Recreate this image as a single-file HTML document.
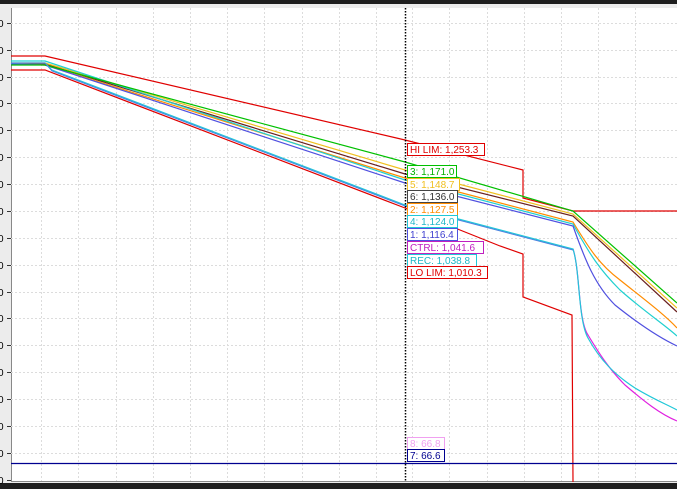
<!DOCTYPE html>
<html><head><style>
html,body{margin:0;padding:0;background:#1e1e1e;}
svg{display:block;}
text{font-family:"Liberation Sans",sans-serif;font-size:10px;}
</style></head><body>
<svg width="677" height="489" viewBox="0 0 677 489" xmlns="http://www.w3.org/2000/svg">
<rect x="0" y="0" width="677" height="489" fill="#1e1e1e"/>
<rect x="0" y="4" width="677" height="479" fill="#ececec"/>
<rect x="11" y="8" width="666" height="474" fill="#ffffff"/>
<line x1="11.5" y1="8" x2="11.5" y2="482" stroke="#888" stroke-width="1"/>
<line x1="11" y1="481.5" x2="677" y2="481.5" stroke="#888" stroke-width="1"/>
<g stroke="#dcdcdc" stroke-width="1" stroke-dasharray="2,2">
<line x1="41.5" y1="8" x2="41.5" y2="481"/><line x1="78.5" y1="8" x2="78.5" y2="481"/><line x1="116.5" y1="8" x2="116.5" y2="481"/><line x1="153.5" y1="8" x2="153.5" y2="481"/><line x1="190.5" y1="8" x2="190.5" y2="481"/><line x1="227.5" y1="8" x2="227.5" y2="481"/><line x1="264.5" y1="8" x2="264.5" y2="481"/><line x1="302.5" y1="8" x2="302.5" y2="481"/><line x1="339.5" y1="8" x2="339.5" y2="481"/><line x1="376.5" y1="8" x2="376.5" y2="481"/><line x1="412.5" y1="8" x2="412.5" y2="481"/><line x1="449.5" y1="8" x2="449.5" y2="481"/><line x1="487.5" y1="8" x2="487.5" y2="481"/><line x1="524.5" y1="8" x2="524.5" y2="481"/><line x1="561.5" y1="8" x2="561.5" y2="481"/><line x1="598.5" y1="8" x2="598.5" y2="481"/><line x1="635.5" y1="8" x2="635.5" y2="481"/>
<line x1="11" y1="23.5" x2="677" y2="23.5"/><line x1="11" y1="50.5" x2="677" y2="50.5"/><line x1="11" y1="77.5" x2="677" y2="77.5"/><line x1="11" y1="103.5" x2="677" y2="103.5"/><line x1="11" y1="130.5" x2="677" y2="130.5"/><line x1="11" y1="157.5" x2="677" y2="157.5"/><line x1="11" y1="184.5" x2="677" y2="184.5"/><line x1="11" y1="211.5" x2="677" y2="211.5"/><line x1="11" y1="238.5" x2="677" y2="238.5"/><line x1="11" y1="265.5" x2="677" y2="265.5"/><line x1="11" y1="292.5" x2="677" y2="292.5"/><line x1="11" y1="318.5" x2="677" y2="318.5"/><line x1="11" y1="345.5" x2="677" y2="345.5"/><line x1="11" y1="372.5" x2="677" y2="372.5"/><line x1="11" y1="399.5" x2="677" y2="399.5"/><line x1="11" y1="426.5" x2="677" y2="426.5"/><line x1="11" y1="453.5" x2="677" y2="453.5"/>
</g>
<g stroke="#333" stroke-width="1">
<line x1="7" y1="23.5" x2="11" y2="23.5"/><line x1="7" y1="50.5" x2="11" y2="50.5"/><line x1="7" y1="77.5" x2="11" y2="77.5"/><line x1="7" y1="103.5" x2="11" y2="103.5"/><line x1="7" y1="130.5" x2="11" y2="130.5"/><line x1="7" y1="157.5" x2="11" y2="157.5"/><line x1="7" y1="184.5" x2="11" y2="184.5"/><line x1="7" y1="211.5" x2="11" y2="211.5"/><line x1="7" y1="238.5" x2="11" y2="238.5"/><line x1="7" y1="265.5" x2="11" y2="265.5"/><line x1="7" y1="292.5" x2="11" y2="292.5"/><line x1="7" y1="318.5" x2="11" y2="318.5"/><line x1="7" y1="345.5" x2="11" y2="345.5"/><line x1="7" y1="372.5" x2="11" y2="372.5"/><line x1="7" y1="399.5" x2="11" y2="399.5"/><line x1="7" y1="426.5" x2="11" y2="426.5"/><line x1="7" y1="453.5" x2="11" y2="453.5"/><line x1="7" y1="480.5" x2="11" y2="480.5"/>
</g>
<g fill="#000" font-size="10">
<text x="-2" y="27">0</text><text x="-2" y="54">0</text><text x="-2" y="81">0</text><text x="-2" y="107">0</text><text x="-2" y="134">0</text><text x="-2" y="161">0</text><text x="-2" y="188">0</text><text x="-2" y="215">0</text><text x="-2" y="242">0</text><text x="-2" y="269">0</text><text x="-2" y="296">0</text><text x="-2" y="322">0</text><text x="-2" y="349">0</text><text x="-2" y="376">0</text><text x="-2" y="403">0</text><text x="-2" y="430">0</text><text x="-2" y="457">0</text><text x="-2" y="484">0</text>
</g>
<g fill="none" stroke-width="1.2">
<polyline stroke="#e00000" points="11,56 45,56 405,140 523,170 523,198 573,211 677,211"/>
<polyline stroke="#e00000" points="11,70 45,70 405,208 500,246 523,254 523,297 572,315 573,482"/>
<polyline stroke="#6a2020" points="11,64 45,64 405,174 573,216 677,312"/>
<polyline stroke="#f0c020" points="11,63 45,63 405,170 573,214 677,308"/>
<path stroke="#ff8c00" d="M11,64 L45,65 L405,178 L573,222 C590,250 600,265 620,280 C645,300 665,315 677,328"/>
<path stroke="#20d0d0" d="M11,61 L45,61 L405,180 L573,224 C590,255 600,270 620,290 C645,312 665,325 677,336"/>
<path stroke="#5050e0" d="M11,64 L45,65 L405,183 L573,226 C585,260 595,285 615,305 C640,325 660,338 677,346"/>
<polyline stroke="#00c000" points="11,65 45,65 405,162 573,211 677,303"/>
<path stroke="#e020e0" d="M573,249 C580,270 578,320 588,335 C600,355 610,370 625,385 C645,402 660,414 677,421"/>
<path stroke="#20c8d8" d="M11,63 L45,63 L52,70 L405,205 L573,249 C580,270 578,320 588,338 C600,360 615,375 635,388 C655,400 668,405 677,410"/>
<polyline stroke="#4a80e0" stroke-width="1" points="11,63 45,63 52,71 405,206 573,250"/>
<line x1="11" y1="463.5" x2="677" y2="463.5" stroke="#000090" stroke-width="1.2"/>
</g>
<line x1="405.5" y1="8" x2="405.5" y2="482" stroke="#000" stroke-width="1.5" stroke-dasharray="1.5,1.5"/>
<g stroke-width="1" fill="#fff">
<rect x="407.5" y="143.5" width="77" height="12" stroke="#e00000"/>
<rect x="407.5" y="165.5" width="49" height="12" stroke="#00c000"/>
<rect x="407.5" y="178.5" width="52" height="12" stroke="#f0c020"/>
<rect x="407.5" y="190.5" width="50" height="12" stroke="#444"/>
<rect x="407.5" y="203.5" width="50" height="12" stroke="#ff8c00"/>
<rect x="407.5" y="215.5" width="50" height="12" stroke="#20c8d8"/>
<rect x="407.5" y="228.5" width="50" height="12" stroke="#5050e0"/>
<rect x="407.5" y="241.5" width="76" height="12" stroke="#c020c0"/>
<rect x="407.5" y="254.5" width="69" height="12" stroke="#20c8d8"/>
<rect x="407.5" y="266.5" width="80" height="12" stroke="#e00000"/>
<rect x="407.5" y="437.5" width="37" height="12" stroke="#f0a0f0"/>
<rect x="407.5" y="449.5" width="37" height="12" stroke="#000090"/>
</g>
<g font-size="10">
<text x="410" y="153" fill="#e00000">HI LIM: 1,253.3</text>
<text x="410" y="175" fill="#00b000">3: 1,171.0</text>
<text x="410" y="188" fill="#f0c020">5: 1,148.7</text>
<text x="410" y="200" fill="#333">6: 1,136.0</text>
<text x="410" y="213" fill="#ff8c00">2: 1,127.5</text>
<text x="410" y="225" fill="#20b8c8">4: 1,124.0</text>
<text x="410" y="238" fill="#4040d0">1: 1,116.4</text>
<text x="410" y="251" fill="#c020c0">CTRL: 1,041.6</text>
<text x="410" y="264" fill="#20b8c8">REC: 1,038.8</text>
<text x="410" y="276" fill="#e00000">LO LIM: 1,010.3</text>
<text x="410" y="447" fill="#f0a0f0">8: 66.8</text>
<text x="410" y="459" fill="#000090">7: 66.6</text>
</g>
</svg>
</body></html>
